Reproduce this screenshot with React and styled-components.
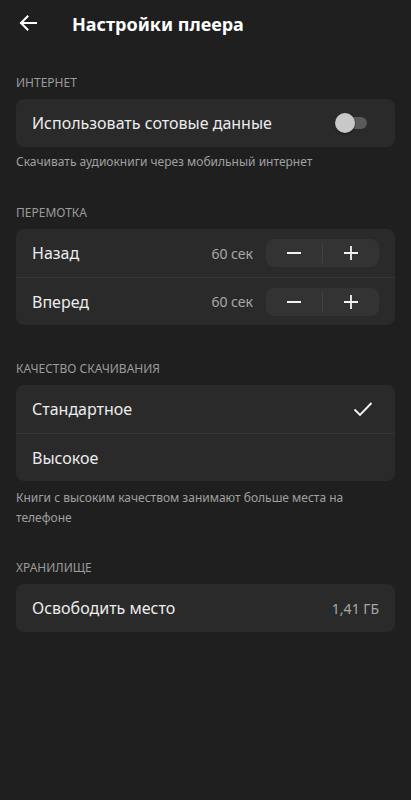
import React from "react";
import styled, { createGlobalStyle } from "styled-components";

const Global = createGlobalStyle`
  html, body {
    margin: 0;
    padding: 0;
    background: #1f1f1f;
  }
  body {
    font-family: "Noto Sans", "Open Sans", sans-serif;
    color: #f0f0f0;
  }
`;

const Page = styled.div`
  width: 411px;
  min-height: 800px;
  background: #1f1f1f;
  box-sizing: border-box;
  padding: 0 16px;
`;

const Header = styled.div`
  display: flex;
  align-items: center;
  height: 48px;
`;

const BackButton = styled.div`
  width: 56px;
  display: flex;
  align-items: center;
  padding-left: 2px;
  margin-top: -2px;
`;

const Title = styled.h1`
  margin: 0 0 0 -2px;
  font-size: 18px;
  font-weight: 700;
  color: #ffffff;
`;

const Section = styled.div`
  margin-top: ${(p) => p.top}px;
`;

const Label = styled.div`
  font-size: 12px;
  color: #9b9b9b;
  text-transform: uppercase;
  line-height: 16px;
  margin-bottom: 8px;
`;

const Card = styled.div`
  background: #2a2a2a;
  border-radius: 8px;
  overflow: hidden;
`;

const Row = styled.div`
  display: flex;
  align-items: center;
  height: 48px;
  padding: 0 16px;
  box-sizing: border-box;
  border-top: ${(p) => (p.divider ? "1px solid #363636" : "none")};
`;

const RowText = styled.div`
  flex: 1;
  font-size: 16px;
  color: #ececec;
`;

const Value = styled.div`
  font-size: 14px;
  color: #a8a8a8;
  margin-right: ${(p) => p.gap || 0}px;
`;

const Caption = styled.div`
  font-size: 12px;
  line-height: 20px;
  color: #a0a0a0;
  margin-top: ${(p) => p.top || 5}px;
  padding-right: 40px;
`;

const Switch = styled.div`
  position: relative;
  width: 32px;
  height: 20px;
  margin-right: 12px;
`;

const Track = styled.div`
  position: absolute;
  left: 4px;
  top: 4px;
  width: 28px;
  height: 12px;
  border-radius: 6px;
  background: #5a5a5a;
`;

const Knob = styled.div`
  position: absolute;
  left: 0;
  top: 0;
  width: 20px;
  height: 20px;
  border-radius: 50%;
  background: #c8c8c8;
  box-shadow: 0 1px 2px rgba(0, 0, 0, 0.5);
`;

const Stepper = styled.div`
  display: flex;
  align-items: center;
  width: 113px;
  height: 28px;
  border-radius: 8px;
  background: #333333;
`;

const StepBtn = styled.div`
  flex: 1;
  display: flex;
  align-items: center;
  justify-content: center;
  height: 100%;
`;

const StepDivider = styled.div`
  width: 1px;
  height: 20px;
  background: #414141;
`;

const CheckWrap = styled.div`
  display: flex;
  margin-right: 6px;
`;

const Back = () => (
  <svg width="20" height="20" viewBox="0 0 20 20" fill="none">
    <path d="M18 10H3M9.5 3.5L3 10l6.5 6.5" stroke="#fff" strokeWidth="2" strokeLinecap="square" />
  </svg>
);

const Minus = () => (
  <svg width="16" height="16" viewBox="0 0 16 16">
    <path d="M1 8h14" stroke="#f2f2f2" strokeWidth="1.8" />
  </svg>
);

const Plus = () => (
  <svg width="16" height="16" viewBox="0 0 16 16">
    <path d="M1 8h14M8 1v14" stroke="#f2f2f2" strokeWidth="1.8" />
  </svg>
);

const Check = () => (
  <svg width="20" height="16" viewBox="0 0 20 16" fill="none">
    <path d="M1.5 8.5l5.5 5.5L18.5 2" stroke="#f2f2f2" strokeWidth="1.9" />
  </svg>
);

const StepControl = () => (
  <Stepper>
    <StepBtn>
      <Minus />
    </StepBtn>
    <StepDivider />
    <StepBtn>
      <Plus />
    </StepBtn>
  </Stepper>
);

export default function App() {
  return (
    <>
      <Global />
      <Page>
        <Header>
          <BackButton>
            <Back />
          </BackButton>
          <Title>Настройки плеера</Title>
        </Header>

        <Section top={27}>
          <Label>Интернет</Label>
          <Card>
            <Row>
              <RowText>Использовать сотовые данные</RowText>
              <Switch>
                <Track />
                <Knob />
              </Switch>
            </Row>
          </Card>
          <Caption>Скачивать аудиокниги через мобильный интернет</Caption>
        </Section>

        <Section top={33}>
          <Label>Перемотка</Label>
          <Card>
            <Row>
              <RowText>Назад</RowText>
              <Value gap={13}>60 сек</Value>
              <StepControl />
            </Row>
            <Row divider>
              <RowText>Вперед</RowText>
              <Value gap={13}>60 сек</Value>
              <StepControl />
            </Row>
          </Card>
        </Section>

        <Section top={36}>
          <Label>Качество скачивания</Label>
          <Card>
            <Row>
              <RowText>Стандартное</RowText>
              <CheckWrap>
                <Check />
              </CheckWrap>
            </Row>
            <Row divider>
              <RowText>Высокое</RowText>
            </Row>
          </Card>
          <Caption top={7}>Книги с высоким качеством занимают больше места на телефоне</Caption>
        </Section>

        <Section top={32}>
          <Label>Хранилище</Label>
          <Card>
            <Row>
              <RowText>Освободить место</RowText>
              <Value>1,41 ГБ</Value>
            </Row>
          </Card>
        </Section>
      </Page>
    </>
  );
}
